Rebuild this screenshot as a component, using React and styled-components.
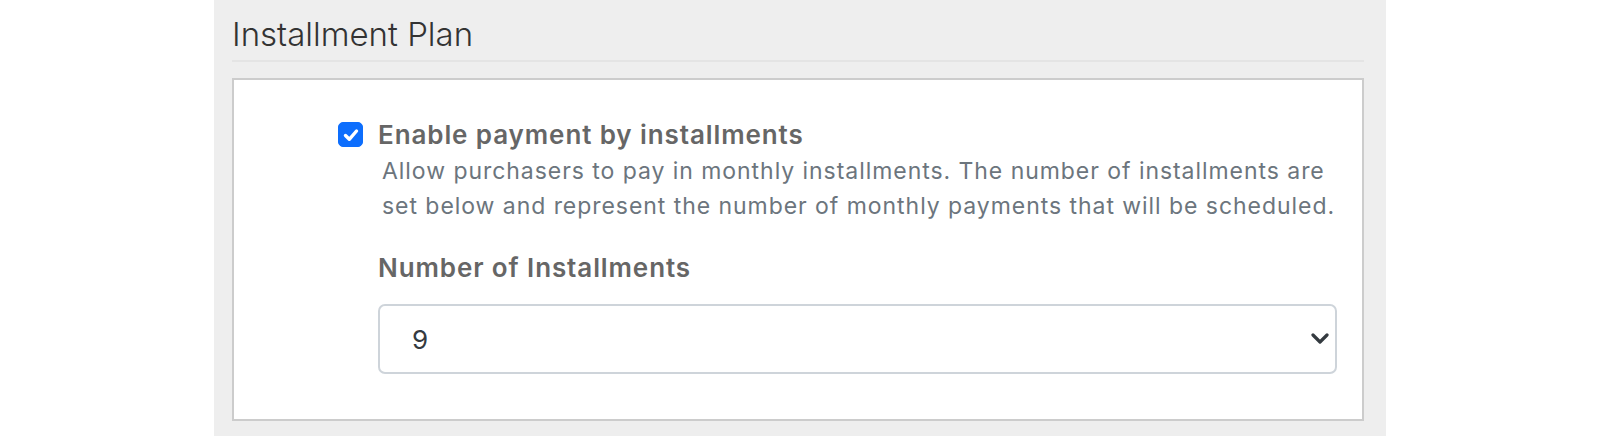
import styled, { createGlobalStyle } from "styled-components";
import { useState } from "react";

const Global = createGlobalStyle`
  html, body {
    margin: 0;
    padding: 0;
    background: #ffffff;
  }
  body {
    font-family: Inter, "Noto Sans", "Liberation Sans", sans-serif;
  }
`;

const Panel = styled.div`
  margin-left: 214px;
  width: 1172px;
  min-height: 436px;
  box-sizing: border-box;
  background: #eeeeee;
  padding: 14px 22px 16px 18px;
`;

const Heading = styled.h2`
  margin: 0;
  font-size: 33px;
  font-weight: 300;
  line-height: 40px;
  color: #333333;
  padding-bottom: 6px;
  border-bottom: 2px solid #e4e4e4;
`;

const Box = styled.div`
  margin-top: 16px;
  background: #ffffff;
  border: 2px solid #cccccc;
  padding: 41px 25px 45px 104px;
`;

const CheckRow = styled.label`
  display: flex;
  align-items: flex-start;
  gap: 15px;
  cursor: pointer;
`;

const Tick = styled.span`
  flex: none;
  width: 25px;
  height: 25px;
  margin-top: 1px;
  border-radius: 5px;
  box-sizing: border-box;
  background: ${(p) => (p.$on ? "#0d6efd" : "#ffffff")};
  border: 1px solid ${(p) => (p.$on ? "#0d6efd" : "#adb5bd")};
  display: flex;
  align-items: center;
  justify-content: center;
`;

const CheckText = styled.div`
  display: flex;
  flex-direction: column;
`;

const CheckLabel = styled.span`
  font-size: 26px;
  font-weight: 600;
  line-height: 28px;
  letter-spacing: 0.9px;
  color: #666666;
`;

const Help = styled.p`
  margin: 5px 0 0 4px;
  font-size: 23px;
  font-weight: 400;
  line-height: 35px;
  letter-spacing: 0.95px;
  white-space: nowrap;
  color: #6c757d;
`;

const Field = styled.div`
  margin: 30px 0 0 40px;
`;

const FieldLabel = styled.div`
  font-size: 26px;
  font-weight: 600;
  line-height: 28px;
  letter-spacing: 0.9px;
  color: #666666;
  margin-bottom: 22px;
`;

const SelectWrap = styled.div`
  position: relative;
`;

const Select = styled.select`
  appearance: none;
  -webkit-appearance: none;
  width: 100%;
  height: 70px;
  box-sizing: border-box;
  border: 2px solid #ced4da;
  border-radius: 7px;
  background: #ffffff;
  padding: 0 32px;
  font-family: Inter, "Noto Sans", "Liberation Sans", sans-serif;
  font-size: 26px;
  color: #343a40;
  outline: none;
`;

const Chevron = styled.svg`
  position: absolute;
  right: 8px;
  top: 29px;
  pointer-events: none;
`;

export default function App() {
  const [on, setOn] = useState(true);
  const [count, setCount] = useState("9");

  return (
    <>
      <Global />
      <Panel>
        <Heading>Installment Plan</Heading>
        <Box>
          <CheckRow onClick={() => setOn(!on)}>
            <Tick $on={on}>
              {on && (
                <svg width="20" height="20" viewBox="0 0 20 20">
                  <path
                    d="M4.5 10.5l3.8 3.8L15.5 6"
                    fill="none"
                    stroke="#fff"
                    strokeWidth="3.4"
                    strokeLinecap="round"
                    strokeLinejoin="round"
                  />
                </svg>
              )}
            </Tick>
            <CheckText>
              <CheckLabel>Enable payment by installments</CheckLabel>
              <Help>
                Allow purchasers to pay in monthly installments. The number of installments are
                <br />
                set below and represent the number of monthly payments that will be scheduled.
              </Help>
            </CheckText>
          </CheckRow>
          <Field>
            <FieldLabel>Number of Installments</FieldLabel>
            <SelectWrap>
              <Select value={count} onChange={(e) => setCount(e.target.value)}>
                {[2, 3, 4, 5, 6, 7, 8, 9, 10, 11, 12].map((n) => (
                  <option key={n} value={n}>
                    {n}
                  </option>
                ))}
              </Select>
              <Chevron width="18" height="12" viewBox="0 0 18 12">
                <path
                  d="M2 2l7 7 7-7"
                  fill="none"
                  stroke="#343a40"
                  strokeWidth="3.2"
                  strokeLinecap="round"
                  strokeLinejoin="round"
                />
              </Chevron>
            </SelectWrap>
          </Field>
        </Box>
      </Panel>
    </>
  );
}
